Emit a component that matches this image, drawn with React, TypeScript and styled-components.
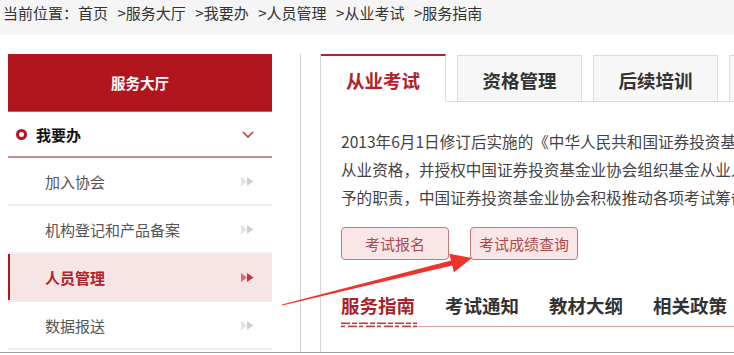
import styled, { createGlobalStyle } from "styled-components";

const GlobalStyle = createGlobalStyle`
  html, body {
    margin: 0;
    padding: 0;
    overflow: hidden;
    background: #fff;
  }
  body {
    font-family: "Noto Sans CJK SC", "Noto Sans", sans-serif;
    color: #333;
  }
`;

const Page = styled.div`
  position: relative;
  width: 734px;
  height: 355px;
  overflow: hidden;
`;

const Crumbs = styled.div`
  height: 35px;
  background: #f5f5f5;
  padding-left: 3px;
  font-size: 15px;
  line-height: 26px;
  color: #333;
  white-space: nowrap;
`;

const Crumb = styled.span`
  margin-left: 9.5px;
`;

const Main = styled.div`
  display: flex;
  height: 318px;
  padding-top: 19px;
  box-sizing: border-box;
  border-bottom: 1px solid #9c9c9c;
`;

const Sidebar = styled.div`
  flex: none;
  width: 264px;
  margin: 0 28px 0 8px;
`;

const SideHead = styled.div`
  height: 57px;
  background: #b1161f;
  border-bottom: 1px solid #d8565c;
  color: #fff;
  font-size: 14.5px;
  font-weight: 700;
  display: flex;
  align-items: center;
  justify-content: center;
`;

const Group = styled.div`
  height: 44px;
  border-bottom: 2px solid #cd8c8c;
  display: flex;
  align-items: center;
  padding: 0 18px 0 8px;
  font-size: 15px;
  font-weight: 700;
  color: #111;
`;

const Dot = styled.span`
  width: 11px;
  height: 11px;
  box-sizing: border-box;
  border: 3.5px solid #b1161f;
  border-radius: 50%;
  margin-right: 9px;
`;

const GroupLabel = styled.span`
  flex: 1;
`;

const Item = styled.div<{ $active?: boolean }>`
  height: 46px;
  display: flex;
  align-items: center;
  justify-content: space-between;
  padding: 0 18px 0 37px;
  font-size: 15px;
  border-bottom: 2px solid ${(p) => (p.$active ? "#f7e5e5" : "#efefef")};
  background: ${(p) => (p.$active ? "#f7e5e5" : "#fff")};
  box-shadow: ${(p) => (p.$active ? "inset 2px 0 0 #b1161f" : "none")};
  color: ${(p) => (p.$active ? "#b0232a" : "#555")};
  font-weight: ${(p) => (p.$active ? 700 : 400)};
`;

const Content = styled.div`
  flex: none;
  width: 1000px;
  border-left: 1px solid #cfcfcf;
  padding-left: 19px;
`;

const Panel = styled.div`
  height: 100%;
  border-left: 1px solid #d6d6d6;
`;

const TabBar = styled.div`
  display: flex;
  align-items: flex-end;
  gap: 11px;
  height: 47px;
  border-bottom: 1px solid #dcdcdc;
`;

const Tab = styled.div<{ $active?: boolean }>`
  width: 125px;
  box-sizing: border-box;
  height: ${(p) => (p.$active ? "48px" : "46px")};
  margin-bottom: ${(p) => (p.$active ? "-1px" : "0")};
  display: flex;
  align-items: center;
  justify-content: center;
  padding-top: 3px;
  font-size: 18.5px;
  font-weight: 700;
  background: ${(p) => (p.$active ? "#fff" : "#f7f7f7")};
  color: ${(p) => (p.$active ? "#b0232a" : "#333")};
  border: 1px solid #dcdcdc;
  border-left: ${(p) => (p.$active ? "none" : "1px solid #dcdcdc")};
  border-top: ${(p) => (p.$active ? "2px solid #b0232a" : "1px solid #dcdcdc")};
  border-bottom: ${(p) => (p.$active ? "1px solid #fff" : "none")};
`;

const Text = styled.div`
  padding: 25px 0 0 20px;
  font-size: 15.6px;
  line-height: 28px;
  color: #444;
`;

const Line = styled.div`
  white-space: nowrap;
`;

const Buttons = styled.div`
  display: flex;
  gap: 21px;
  margin: 16px 0 0 20px;
`;

const Button = styled.div`
  width: 108px;
  height: 33px;
  box-sizing: border-box;
  border: 1px solid #c9767a;
  border-radius: 4px;
  background: #f9e7e7;
  color: #b0474c;
  font-size: 15px;
  display: flex;
  align-items: center;
  justify-content: center;
`;

const SubNav = styled.div`
  display: flex;
  gap: 30px;
  margin: 30px 0 0 20px;
  border-bottom: 1px solid #d9a0a0;
`;

const SubTab = styled.div<{ $active?: boolean }>`
  position: relative;
  font-size: 18.5px;
  line-height: 30px;
  padding-bottom: 6px;
  font-weight: 700;
  color: ${(p) => (p.$active ? "#a8232a" : "#333")};
`;

const Fret = styled.svg`
  position: absolute;
  left: 0;
  bottom: -2px;
  background: #fff;
`;

const Overlay = styled.svg`
  position: absolute;
  left: 0;
  top: 0;
  pointer-events: none;
`;

const Chevron = () => (
  <svg width="12" height="7" viewBox="0 0 12 7">
    <polyline points="1,1 6,6 11,1" fill="none" stroke="#c0392b" strokeWidth="1.6" />
  </svg>
);

const Play = ({ active }: { active?: boolean }) => (
  <svg width="13" height="9" viewBox="0 0 13 9">
    <polygon points="0,0 6,4.5 0,9" fill={active ? "#df6a70" : "#e2e2e2"} />
    <polygon points="6,0 12.5,4.5 6,9" fill={active ? "#c8323a" : "#d0d0d0"} />
  </svg>
);

const crumbs = ["服务大厅", "我要办", "人员管理", "从业考试", "服务指南"];
const items = ["加入协会", "机构登记和产品备案", "人员管理", "数据报送"];
const tabs = ["从业考试", "资格管理", "后续培训", "资质管理"];
const subTabs = ["服务指南", "考试通知", "教材大纲", "相关政策"];

export default function App() {
  return (
    <Page>
      <GlobalStyle />
      <Crumbs>
        当前位置：首页
        {crumbs.map((c) => (
          <Crumb key={c}>&gt;{c}</Crumb>
        ))}
      </Crumbs>
      <Main>
        <Sidebar>
          <SideHead>服务大厅</SideHead>
          <Group>
            <Dot />
            <GroupLabel>我要办</GroupLabel>
            <Chevron />
          </Group>
          {items.map((it) => (
            <Item key={it} $active={it === "人员管理"}>
              <span>{it}</span>
              <Play active={it === "人员管理"} />
            </Item>
          ))}
        </Sidebar>
        <Content>
          <Panel>
            <TabBar>
              {tabs.map((t, i) => (
                <Tab key={t} $active={i === 0}>
                  {t}
                </Tab>
              ))}
            </TabBar>
            <Text>
              <Line>2013年6月1日修订后实施的《中华人民共和国证券投资基金法》规定，基金从业人员应当具备基金</Line>
              <Line>从业资格，并授权中国证券投资基金业协会组织基金从业人员的从业考试、资质管理和业务培训。为履行法律赋</Line>
              <Line>予的职责，中国证券投资基金业协会积极推动各项考试筹备工作。</Line>
            </Text>
            <Buttons>
              <Button>考试报名</Button>
              <Button>考试成绩查询</Button>
            </Buttons>
            <SubNav>
              {subTabs.map((s, i) => (
                <SubTab key={s} $active={i === 0}>
                  {s}
                  {i === 0 && (
                    <Fret width="77" height="6" viewBox="0 0 77 6">
                      <defs>
                        <pattern id="fret" width="18" height="6" patternUnits="userSpaceOnUse">
                          <rect x="0" y="0.5" width="9" height="1.6" fill="#c0393f" />
                          <rect x="0" y="3.6" width="4" height="1.6" fill="#c0393f" />
                          <rect x="7" y="3.6" width="9" height="1.6" fill="#c0393f" />
                          <rect x="11" y="0.5" width="5" height="1.6" fill="#c0393f" />
                        </pattern>
                      </defs>
                      <rect width="76" height="6" fill="url(#fret)" />
                    </Fret>
                  )}
                </SubTab>
              ))}
            </SubNav>
          </Panel>
        </Content>
      </Main>
      <Overlay width="734" height="355" viewBox="0 0 734 355">
        <polygon
          points="281.9,304.4 451,260.6 449.3,253.8 472,258 453.9,272.2 452.2,265.4 282.1,305.6"
          fill="#f0342d"
        />
      </Overlay>
    </Page>
  );
}
